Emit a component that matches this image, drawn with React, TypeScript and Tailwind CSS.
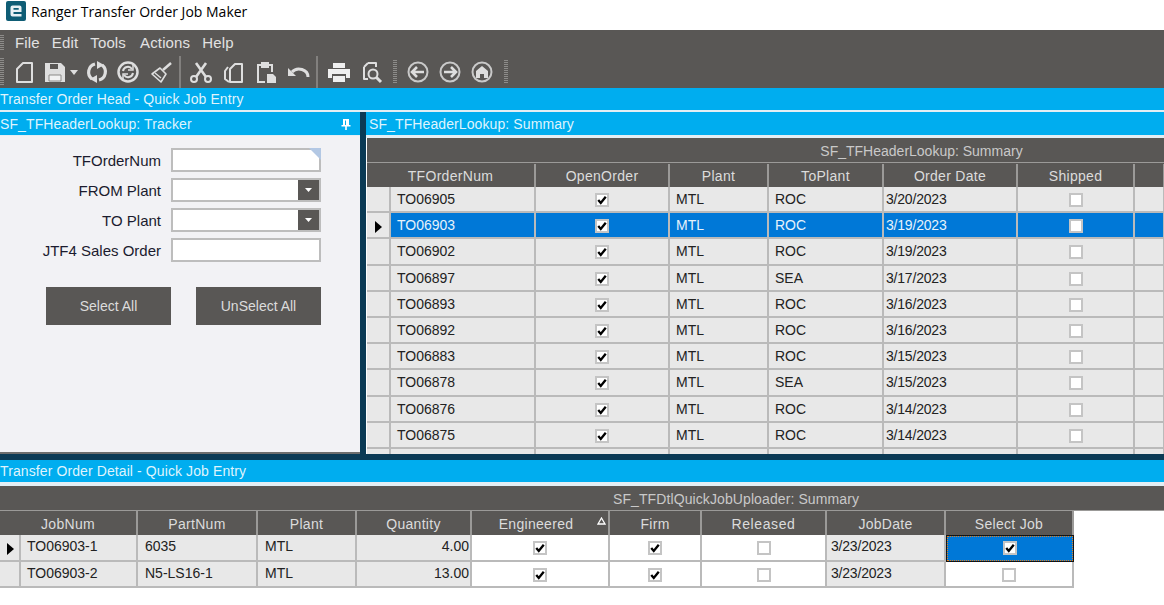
import React from 'react';

const topCols = 'grid grid-cols-[24px_145px_134px_99px_115px_134px_117px_30px]';
const bottomCols = 'grid grid-cols-[21px_117px_120px_99px_115px_138px_92px_125px_119px_128px]';

// rows of the upper grid
const orders = [
  { num: 'TO06905', to: 'ROC', date: '3/20/2023' },
  { num: 'TO06903', to: 'ROC', date: '3/19/2023', selected: true },
  { num: 'TO06902', to: 'ROC', date: '3/19/2023' },
  { num: 'TO06897', to: 'SEA', date: '3/17/2023' },
  { num: 'TO06893', to: 'ROC', date: '3/16/2023' },
  { num: 'TO06892', to: 'ROC', date: '3/16/2023' },
  { num: 'TO06883', to: 'ROC', date: '3/15/2023' },
  { num: 'TO06878', to: 'SEA', date: '3/15/2023' },
  { num: 'TO06876', to: 'ROC', date: '3/14/2023' },
  { num: 'TO06875', to: 'ROC', date: '3/14/2023' },
];

const jobs = [
  { num: 'TO06903-1', part: '6035', qty: '4.00', current: true },
  { num: 'TO06903-2', part: 'N5-LS16-1', qty: '13.00' },
];

function Check({ on }: { on?: boolean }) {
  return (
    <span className="flex h-[14px] w-[14px] items-center justify-center border-2 border-[#c4c4c4] bg-white">
      {on && (
        <svg width="12" height="12" viewBox="0 0 12 12">
          <path d="M1.5 6 L4.5 9.5 L10.5 2" fill="none" stroke="#000" strokeWidth="2.8" />
        </svg>
      )}
    </span>
  );
}

function Arrow() {
  return (
    <svg width="8" height="12" viewBox="0 0 8 12">
      <path d="M1 0 L8 6 L1 12 Z" fill="#000" />
    </svg>
  );
}

function Cell({ children, className = '' }: { children?: React.ReactNode; className?: string }) {
  return (
    <div className={`overflow-hidden whitespace-nowrap border-r-2 border-b-2 border-[#bababa] text-[14px] ${className}`}>
      {children}
    </div>
  );
}

function CheckCell({ on, className = '' }: { on?: boolean; className?: string }) {
  return (
    <div className={`flex items-center justify-center border-r-2 border-b-2 border-[#bababa] pt-[2px] ${className}`}>
      <Check on={on} />
    </div>
  );
}

function Head({ children, className = '' }: { children?: React.ReactNode; className?: string }) {
  return (
    <div className={`flex items-center justify-center whitespace-nowrap border-r-2 border-[#9b9a98] bg-[#595755] pt-[2px] text-[14px] tracking-[0.3px] text-[#dcdcdc] ${className}`}>
      {children}
    </div>
  );
}

function Grip({ className = '' }: { className?: string }) {
  return (
    <div className={`w-[4px] bg-[repeating-linear-gradient(to_bottom,#8d8c8a_0,#8d8c8a_1px,transparent_1px,transparent_2px)] ${className}`} />
  );
}

function Sep({ className = '' }: { className?: string }) {
  return <div className={`h-[32px] w-[2px] bg-[#82807e] ${className}`} />;
}

function Icon({ children, w = 26, className = '' }: { children: React.ReactNode; w?: number; className?: string }) {
  return (
    <svg width={w} height="26" viewBox={`0 0 ${w} 26`} fill="none" stroke="#dedede" strokeWidth="2" className={className}>
      {children}
    </svg>
  );
}

function Toolbar() {
  return (
    <div className="flex h-[32px] items-center bg-[#595755]">
      <Grip className="h-[28px]" />
      <Icon className="ml-[8px]"><path d="M11 4 H20 V23 H5 V10 Z" strokeLinejoin="round" /></Icon>
      <Icon className="ml-[4px]">
        <path d="M3 4 H19 L23 8 V23 H3 Z" fill="#dedede" stroke="none" />
        <path d="M7 16 H19 V22 H7 Z" fill="#f2f2f2" stroke="#8a8987" strokeWidth="1" />
        <path d="M8 5 H16 V10 H8 Z" fill="#595755" stroke="none" />
      </Icon>
      <svg width="8" height="5" viewBox="0 0 8 5" className="ml-[2px]"><path d="M0 0 H8 L4 5 Z" fill="#dedede" /></svg>
      <Icon className="ml-[6px]">
        <path d="M11 5 A8.5 8.5 0 0 0 8 20" strokeWidth="3.2" />
        <path d="M15 21 A8.5 8.5 0 0 0 18 6" strokeWidth="3.2" />
        <path d="M13 16 V24 L6 20 Z" fill="#dedede" stroke="none" />
        <path d="M13 10 V2 L20 6 Z" fill="#dedede" stroke="none" />
      </Icon>
      <Icon className="ml-[5px]">
        <circle cx="13" cy="13" r="9.5" strokeWidth="2.5" />
        <path d="M8 12 A5 5 0 0 1 17 10 M18 14 A5 5 0 0 1 9 16" strokeWidth="2" />
        <path d="M18 6 V11 H13 M8 20 V15 H13" strokeWidth="1.5" />
      </Icon>
      <Icon className="ml-[7px]">
        <path d="M23 4 L15 11" strokeWidth="2.5" />
        <path d="M12 9 L18 15 L13 23 L4 15 Z" strokeWidth="1.6" strokeLinejoin="round" />
        <path d="M7 14 L13 19" strokeWidth="1.4" />
      </Icon>
      <Sep className="ml-[5px]" />
      <Icon className="ml-[7px]">
        <path d="M8 4 L18 18 M18 4 L8 18" strokeWidth="2.6" />
        <circle cx="6" cy="20" r="3" /><circle cx="20" cy="20" r="3" />
      </Icon>
      <Icon className="ml-[7px]">
        <path d="M7 8 L4 12 V20 L8 23 M9 10 L14 5 H21 V23 H9 Z" strokeLinejoin="round" />
      </Icon>
      <Icon className="ml-[6px]">
        <path d="M8 6 H5 V23 H12 M16 6 H19 V13" />
        <path d="M9 4 H15 V8 H9 Z" fill="#dedede" />
        <path d="M14 15 H20 L23 18 V24 H14 Z" fill="#dedede" stroke="none" />
      </Icon>
      <Icon className="ml-[7px]">
        <path d="M6 13 A9 8 0 0 1 22 18" strokeWidth="3" />
        <path d="M2 9 V17 H10 Z" fill="#dedede" stroke="none" />
      </Icon>
      <Sep className="ml-[4px]" />
      <Icon className="ml-[7px]" w={28}>
        <path d="M8 4 H20 V9 H8 Z" fill="#efefef" stroke="none" />
        <path d="M3 10 H25 V19 H21 V15 H7 V19 H3 Z" fill="#efefef" stroke="none" />
        <path d="M8 17 H20 V23 H8 Z" fill="#efefef" stroke="none" />
      </Icon>
      <Icon className="ml-[6px]">
        <path d="M9 4 H17 V8 M5 8 L9 4 M5 8 V20 H9" strokeLinejoin="round" />
        <circle cx="14" cy="15" r="4.5" />
        <path d="M17 18 L22 23" strokeWidth="3" />
      </Icon>
      <Grip className="ml-[8px] h-[24px]" />
      <Icon className="ml-[8px]">
        <circle cx="13" cy="13" r="9.5" stroke="#c9c9c9" />
        <path d="M19 13 H8 M12 8 L7 13 L12 18" strokeWidth="2.6" />
      </Icon>
      <Icon className="ml-[6px]">
        <circle cx="13" cy="13" r="9.5" stroke="#c9c9c9" />
        <path d="M7 13 H18 M14 8 L19 13 L14 18" strokeWidth="2.6" />
      </Icon>
      <Icon className="ml-[6px]">
        <circle cx="13" cy="13" r="9.5" stroke="#c9c9c9" />
        <path d="M13 7 L19 12 V19 H15 V15 H11 V19 H7 V12 Z" fill="#dedede" stroke="none" />
      </Icon>
      <Grip className="ml-[9px] h-[24px]" />
    </div>
  );
}

function Field({ label, kind }: { label: string; kind?: 'combo' | 'note' }) {
  return (
    <div className="flex items-center">
      <div className="w-[161px] text-right text-[15px] leading-none text-[#1b1b2e]">{label}</div>
      <div className="relative ml-[10px] flex h-[24px] w-[150px] border-2 border-[#bdbdbd] bg-white">
        {kind === 'note' && (
          <svg width="12" height="12" viewBox="0 0 12 12" className="absolute -right-[2px] -top-[2px]">
            <path d="M0 0 H12 V12 Z" fill="#b3c8e4" />
          </svg>
        )}
        {kind === 'combo' && (
          <div className="ml-auto flex w-[21px] items-center justify-center bg-[#595755]">
            <svg width="7" height="4" viewBox="0 0 7 4"><path d="M0 0 H7 L3.5 4 Z" fill="#fff" /></svg>
          </div>
        )}
      </div>
    </div>
  );
}

function Tracker() {
  return (
    <div className="flex w-[360px] flex-col">
      <div className="flex h-[23px] items-center justify-between bg-[#00adef] pr-[9px] pt-[1px] text-[14px] tracking-[0.1px] text-[#dff4fd]">
        <span>SF_TFHeaderLookup: Tracker</span>
        <svg width="10" height="12" viewBox="0 0 10 12">
          <path d="M2 1 H8 V7 H9.5 V8.5 H5.8 V12 H4.2 V8.5 H.5 V7 H2 Z M4 2.5 V7 H5 V2.5 Z" fill="#fff" />
        </svg>
      </div>
      <div className="h-[1px] bg-[#e3eef4]" />
      <div className="flex flex-1 flex-col border-b-2 border-[#6d6d6d] bg-[#f2f2f5] pt-[12px]">
        <div className="flex flex-col gap-[6px]">
          <Field label="TFOrderNum" kind="note" />
          <Field label="FROM Plant" kind="combo" />
          <Field label="TO Plant" kind="combo" />
          <Field label="JTF4 Sales Order" />
        </div>
        <div className="ml-[46px] mt-[25px] flex gap-[25px]">
          <button className="h-[38px] w-[125px] bg-[#595755] text-[14px] text-[#dcdcdc]">Select All</button>
          <button className="h-[38px] w-[125px] bg-[#595755] text-[14px] text-[#dcdcdc]">UnSelect All</button>
        </div>
      </div>
    </div>
  );
}

function OrdersGrid() {
  return (
    <div className="flex min-w-0 flex-1 flex-col overflow-hidden">
      <div className="flex h-[23px] items-center bg-[#00adef] pl-[3px] pt-[1px] text-[14px] tracking-[0.1px] text-[#dff4fd]">
        SF_TFHeaderLookup: Summary
      </div>
      <div className="h-[3px] bg-[#e3eef4]" />
      <div className="flex-1 overflow-hidden bg-white pl-[1px]">
        <div className="flex h-[24px] items-center justify-center bg-[#595755] pl-[312px] pt-[2px] text-[14px] text-[#c9c9c9]">
          SF_TFHeaderLookup: Summary
        </div>
        <div className={`${topCols} h-[25px] border-y border-[#9b9a98] bg-[#595755] pt-[1px]`}>
          <Head className="col-span-2">TFOrderNum</Head>
          <Head>OpenOrder</Head>
          <Head>Plant</Head>
          <Head>ToPlant</Head>
          <Head>Order Date</Head>
          <Head>Shipped</Head>
          <Head />
        </div>
        {orders.map((o) => {
          const bg = o.selected ? 'bg-[#0078d7] text-[#e6f2fb]' : 'bg-[#e8e8e8] text-[#222]';
          return (
            <div key={o.num} className={`${topCols} h-[26.2px]`}>
              <div className="flex items-center justify-center border-r-2 border-b-2 border-[#bababa] bg-[#e8e8e8] pt-[3px]">
                {o.selected && <Arrow />}
              </div>
              <Cell className={`pl-[6px] pt-[2px] ${bg}`}>{o.num}</Cell>
              <CheckCell on className={bg} />
              <Cell className={`pl-[6px] pt-[2px] ${bg}`}>MTL</Cell>
              <Cell className={`pl-[6px] pt-[2px] ${bg}`}>{o.to}</Cell>
              <Cell className={`pl-[2px] pt-[2px] tracking-[-0.2px] ${bg}`}>{o.date}</Cell>
              <CheckCell className={bg} />
              <Cell className={bg} />
            </div>
          );
        })}
        <div className={`${topCols} h-[26px]`}>
          {[0, 1, 2, 3, 4, 5, 6, 7].map((i) => (
            <Cell key={i} className="bg-[#e8e8e8]" />
          ))}
        </div>
      </div>
    </div>
  );
}

function JobsGrid() {
  return (
    <div className="flex-1 bg-white">
      <div className="flex h-[24px] items-center justify-center bg-[#595755] pl-[308px] pt-[2px] text-[14px] tracking-[0.1px] text-[#c9c9c9]">
        SF_TFDtlQuickJobUploader: Summary
      </div>
      <div className={`${bottomCols} h-[25px] border-t border-[#9b9a98]`}>
        <Head className="col-span-2">JobNum</Head>
        <Head>PartNum</Head>
        <Head>Plant</Head>
        <Head>Quantity</Head>
        <div className="relative flex items-center justify-center border-r-2 border-[#9b9a98] bg-[#595755] pt-[2px] text-[14px] tracking-[0.3px] text-[#dcdcdc]">
          <span className="pr-[8px]">Engineered</span>
          <svg width="9" height="8" viewBox="0 0 9 8" className="absolute right-[2px] top-[6px]">
            <path d="M4.5 1 L8 7 H1 Z" fill="none" stroke="#fff" strokeWidth="1.3" />
          </svg>
        </div>
        <Head>Firm</Head>
        <Head className="tracking-[0.6px]">Released</Head>
        <Head>JobDate</Head>
        <Head>Select Job</Head>
      </div>
      {jobs.map((j) => (
        <div key={j.num} className={`${bottomCols} h-[26.5px]`}>
          <div className="flex items-center justify-center border-r-2 border-b-2 border-[#bababa] bg-[#e8e8e8] pt-[3px]">
            {j.current && <Arrow />}
          </div>
          <Cell className="bg-[#e8e8e8] pl-[6px] pt-[1px] text-[#222]">{j.num}</Cell>
          <Cell className="bg-[#e8e8e8] pl-[7px] pt-[1px] text-[#222]">{j.part}</Cell>
          <Cell className="bg-[#e8e8e8] pl-[7px] pt-[1px] text-[#222]">MTL</Cell>
          <Cell className="bg-[#e8e8e8] pr-[1px] pt-[1px] text-right text-[#222]">{j.qty}</Cell>
          <CheckCell on className="bg-white" />
          <CheckCell on className="bg-white" />
          <CheckCell className="bg-white" />
          <Cell className="bg-[#e8e8e8] pl-[4px] pt-[1px] tracking-[-0.2px] text-[#222]">3/23/2023</Cell>
          {j.current ? (
            <div className="bg-[#151515] p-[1px]">
              <div className="flex h-full items-center justify-center border border-dotted border-[#e08020] bg-[#0078d7]">
                <Check on />
              </div>
            </div>
          ) : (
            <CheckCell className="bg-white" />
          )}
        </div>
      ))}
    </div>
  );
}

export default function App() {
  return (
    <div className="flex h-[605px] w-[1164px] flex-col overflow-hidden bg-white font-['Liberation_Sans',sans-serif]">
      {/* Title bar */}
      <div className="flex h-[30px] items-center pb-[8px] pl-[6px]">
        <svg width="20" height="20" viewBox="0 0 20 20">
          <rect width="20" height="20" rx="2" fill="#0f5d75" />
          <path d="M4.5 10 V6.5 Q4.5 4.5 6.5 4.5 H13.5 Q15.5 4.5 15.5 6.5 V11 H7.5 V13 H15.5 V15.5 H6.5 Q4.5 15.5 4.5 13.5 Z M7.5 7 V8.8 H12.7 V7 Z" fill="#e9f1f4" fillRule="evenodd" />
        </svg>
        <span className="ml-[5px] font-['Open_Sans',sans-serif] text-[14px] text-black">Ranger Transfer Order Job Maker</span>
      </div>

      {/* Menu */}
      <div className="flex h-[26px] items-center bg-[#595755] text-[15px] text-[#e2e2e2]">
        <Grip className="h-[16px]" />
        <div className="ml-[11px] flex gap-[12px] tracking-[0.15px]">
          <span>File</span>
          <span>Edit</span>
          <span>Tools</span>
          <span className="ml-[2px]">Actions</span>
          <span>Help</span>
        </div>
      </div>
      <Toolbar />

      <div className="flex h-[22px] items-center bg-[#00adef] text-[14px] tracking-[0.1px] text-[#dff4fd]">
        Transfer Order Head - Quick Job Entry
      </div>
      <div className="h-[2px] bg-[#e3eef4]" />

      <div className="flex h-[342px]">
        <Tracker />
        <div className="w-[6px] bg-[#0b3a55]" />
        <OrdersGrid />
      </div>

      <div className="h-[6px] bg-[#0b3a55]" />
      <div className="flex h-[22px] items-center bg-[#00adef] text-[14px] tracking-[0.1px] text-[#dff4fd]">
        Transfer Order Detail - Quick Job Entry
      </div>
      <div className="h-[4px] bg-[#e3eef4]" />
      <JobsGrid />
    </div>
  );
}
